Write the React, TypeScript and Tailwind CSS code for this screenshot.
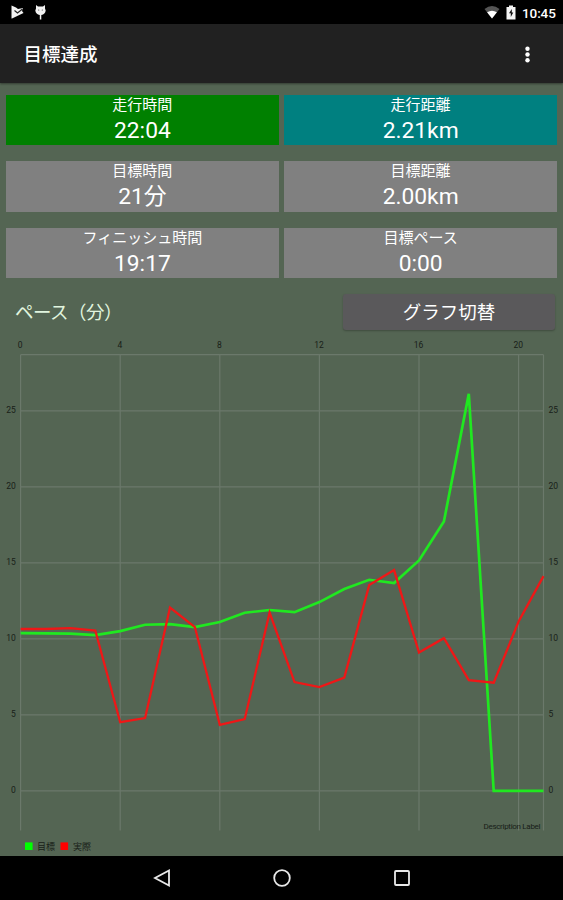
const target = [10.38,10.37,10.35,10.25,10.51,10.93,10.97,10.78,11.11,11.72,11.9,11.76,12.42,13.28,13.89,13.67,15.16,17.72,26.12,0,0,0]
const actual = [10.65,10.65,10.71,10.55,4.52,4.79,12.06,10.78,4.35,4.72,11.73,7.16,6.83,7.45,13.54,14.53,9.1,10.05,7.29,7.12,11.14,14.13]

const px = (v:number) => 20.6 + v * 24.9
const py = (v:number) => 450.9 - v * 15.2
const toPoints = (data:number[]) => data.map((v,i)=>`${px(i)},${py(v)}`).join(' ')

const cards = [
  { label:'走行時間', value:'22:04', color:'bg-[#008000]' },
  { label:'走行距離', value:'2.21km', color:'bg-[#008080]' },
  { label:'目標時間', value:'21分', color:'bg-[#808080]' },
  { label:'目標距離', value:'2.00km', color:'bg-[#808080]' },
  { label:'フィニッシュ時間', value:'19:17', color:'bg-[#808080]' },
  { label:'目標ペース', value:'0:00', color:'bg-[#808080]' },
]

function StatusBar(){
  return (
    <div className="h-6 shrink-0 bg-black flex items-center justify-between pl-[11px] pr-[7px] text-white">
      <div className="flex items-center gap-[11px]">
        <svg width="13" height="14" viewBox="0 0 13 14"><path d="M.5.5 5 2.5 7 4l5-1-1 3 1.5 2L1 13.5H.5Z" fill="#f2f2f2"/><path d="m3.5 5.5 3 2.5 5-4" fill="none" stroke="#222" strokeWidth="1.2"/></svg>
        <svg width="11" height="15" viewBox="0 0 11 15"><path d="m1 0 2 1.5h5L10 0v3.5l.7 2A5.2 5.2 0 0 1 6.3 10v4.5H4.8V10A5.2 5.2 0 0 1 .3 5.5L1 3.5Z" fill="#f2f2f2"/><circle cx="3.7" cy="5" r=".6" fill="#444"/><circle cx="7.3" cy="5" r=".6" fill="#444"/></svg>
      </div>
      <div className="flex items-center">
        <svg width="16" height="13" viewBox="0 0 16 13" className="mr-[6px]"><path d="M.5 3Q8-2.8 15.5 3L8 12.5Z" fill="#555"/><path d="M3.1 6.2Q8 3.2 12.9 6.2L8 12.5Z" fill="#fff"/></svg>
        <svg width="10" height="15" viewBox="0 0 10 15" className="mr-[6px]"><path d="M3 .5h4V2h2.5v12.5H.5V2H3Z" fill="#f4f4f4"/><path d="M5.8 4 3 8.3h1.8V12L7.3 7.5H5.8Z" fill="#111"/></svg>
        <span className="w-[34px] pt-px text-[13.5px] font-medium leading-6 tracking-[-0.1px]">10:45</span>
      </div>
    </div>
  )
}

function Chart(){
  return (
    <svg width="563" height="516" viewBox="0 0 563 516" className="block shrink-0" fontSize="8.5" fill="#182018">
      <g stroke="#6b796b" strokeWidth="1.2">
        <path d="M20.6 14.7H543.5" />
        {[0,4,8,12,16,20,21].map(v=><path key={v} d={`M${px(v)} 14.7V490.5`} />)}
        {[0,5,10,15,20,25].map(v=><path key={v} d={`M20.6 ${py(v)}H543.5`} />)}
      </g>
      {[0,4,8,12,16,20].map(v=><text key={v} x={px(v)-.4} y="8" textAnchor="middle">{v}</text>)}
      {[0,5,10,15,20,25].map(v=><g key={v}><text x="15.8" y={py(v)+2.5} textAnchor="end">{v}</text><text x="548.5" y={py(v)+2.5}>{v}</text></g>)}
      <polyline points={toPoints(target)} fill="none" stroke="#20e820" strokeWidth="2.7"/>
      <polyline points={toPoints(actual)} fill="none" stroke="#ef1717" strokeWidth="2.3"/>
      <text x="540.5" y="488.5" textAnchor="end" fontSize="8" textLength="57">Description Label</text>
      <rect x="25" y="502.4" width="7.6" height="7.6" fill="#00ff00"/>
      <text x="37" y="509.5" fontSize="9">目標</text>
      <rect x="60.5" y="502.4" width="7.6" height="7.6" fill="#ff0000"/>
      <text x="73" y="509.5" fontSize="9">実際</text>
    </svg>
  )
}

export default function App(){
  return (
    <main className="w-[563px] h-[900px] flex flex-col overflow-hidden bg-[#546553] font-[Roboto,'Noto_Sans_CJK_JP',sans-serif] text-white">
      <StatusBar/>
      <header className="h-[59px] shrink-0 bg-[#212121] flex items-center justify-between pl-[23.5px] pr-[33px] shadow-[0_1px_2px_rgba(0,0,0,0.4)]">
        <h1 className="pt-1 text-[18.5px] font-medium leading-none">目標達成</h1>
        <svg width="5" height="17" viewBox="0 0 5 17" fill="#fff" className="mt-px"><circle cx="2.5" cy="2.7" r="2.2"/><circle cx="2.5" cy="8.5" r="2.2"/><circle cx="2.5" cy="14.3" r="2.2"/></svg>
      </header>
      <section className="mt-[11.5px] h-[183.5px] shrink-0 px-[6px] grid grid-cols-2 gap-x-[5.5px] gap-y-[16px]">
        {cards.map(c=>(
          <div key={c.label} className={`${c.color} flex flex-col items-center`}>
            <div className="h-[20px] pt-px text-[15px] leading-[19px]">{c.label}</div>
            <div className="h-[30px] text-[22.8px] leading-[31px]">{c.value}</div>
          </div>
        ))}
      </section>
      <section className="h-[62px] shrink-0 flex justify-between pl-[15px] pr-2 pt-4">
        <h2 className="text-[18.5px] leading-[38px] tracking-[-0.5px] text-[#e1f5df]">ペース（分）</h2>
        <button className="w-[212px] h-[35.5px] rounded-[3px] bg-[#5a595b] text-[18.5px] leading-[38px] shadow-[0_1px_2px_rgba(0,0,0,0.25)]">グラフ切替</button>
      </section>
      <Chart/>
      <nav className="h-11 shrink-0 bg-black flex items-center justify-center gap-[102px]">
        <svg width="18" height="18" viewBox="0 0 18 18" fill="none" stroke="#e8e8e8" strokeWidth="1.8"><path d="M16 1.5v15L2 9Z"/></svg>
        <svg width="18" height="18" viewBox="0 0 18 18" fill="none" stroke="#e8e8e8" strokeWidth="1.8"><circle cx="9" cy="9" r="7.8"/></svg>
        <svg width="18" height="18" viewBox="0 0 18 18" fill="none" stroke="#e8e8e8" strokeWidth="1.8"><rect x="2" y="2" width="14" height="14" rx="1"/></svg>
      </nav>
    </main>
  )
}
